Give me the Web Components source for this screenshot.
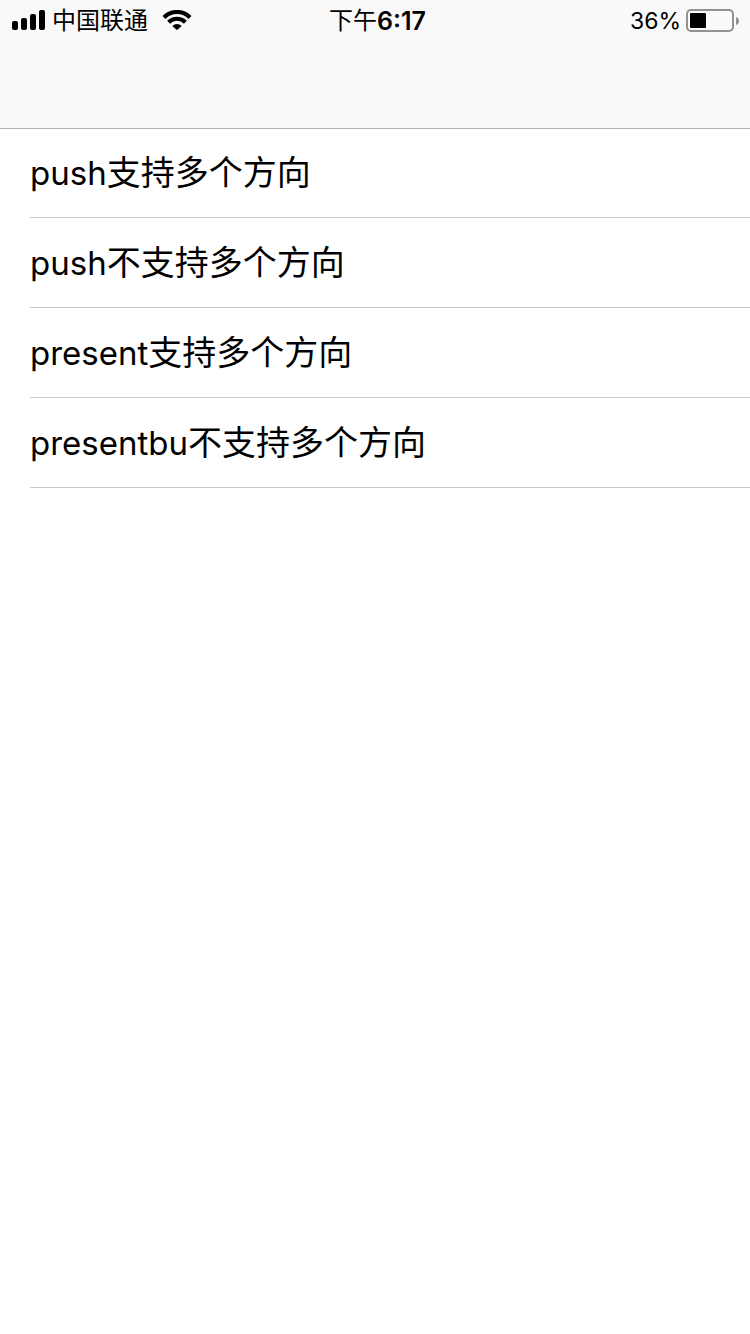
<!DOCTYPE html>
<html lang="zh-CN">
<head>
<meta charset="utf-8">
<meta name="viewport" content="width=device-width, initial-scale=1">
<title>方向</title>
<style>
body { margin: 0; background: #fff; color: #000; font-family: Inter, "Noto Sans CJK SC", sans-serif; }
</style>
</head>
<body>
<app-screen>
  <nav-header slot="header">
    <status-bar>
      <signal-icon slot="start"></signal-icon>
      <span slot="start">中国联通</span>
      <wifi-icon slot="start"></wifi-icon>
      <span slot="time">下午</span><b slot="time">6:17</b>
      <span slot="end">36%</span>
      <battery-icon slot="end"></battery-icon>
    </status-bar>
  </nav-header>
  <table-list>
    <table-cell><span>push</span>支持多个方向</table-cell>
    <table-cell><span>push</span>不支持多个方向</table-cell>
    <table-cell><span>present</span>支持多个方向</table-cell>
    <table-cell><span>presentbu</span>不支持多个方向</table-cell>
  </table-list>
</app-screen>
<script>
function define(name, html) {
  const template = document.createElement('template');
  template.innerHTML = html;
  customElements.define(name, class extends HTMLElement {
    constructor() {
      super();
      this.attachShadow({ mode: 'open' }).append(template.content.cloneNode(true));
    }
  });
}

define('app-screen', `
  <style>:host { display: block; min-height: 100vh; background: #fff; }</style>
  <slot name="header"></slot>
  <main><slot></slot></main>`);

define('nav-header', `
  <style>
    :host { display: block; background: #f9f9f9; }
    nav { height: 86px; border-bottom: 1px solid #b2b2b2; }
  </style>
  <slot></slot><nav></nav>`);

define('status-bar', `
  <style>
    :host { display: grid; grid-template-columns: 1fr auto 1fr; align-items: center; height: 42px; padding: 0 11px 0 12px; font-size: 24px; line-height: 42px; white-space: nowrap; }
    div { display: flex; align-items: center; }
    .start { gap: 7px; }
    .time { padding-left: 4px; }
    ::slotted(b) { font-size: 25px; font-weight: 600; }
    .end { justify-content: flex-end; gap: 5px; font-size: 23px; }
  </style>
  <div class="start"><slot name="start"></slot></div>
  <div class="time"><slot name="time"></slot></div>
  <div class="end"><slot name="end"></slot></div>`);

define('signal-icon', `
  <style>:host, svg { display: block; }</style>
  <svg width="33" height="22" viewBox="0 0 33 22" aria-hidden="true">
    <rect x="0" y="11" width="6" height="9" rx="2"/>
    <rect x="9" y="8" width="6" height="12" rx="2"/>
    <rect x="18" y="4" width="6" height="16" rx="2"/>
    <rect x="27" y="0" width="6" height="20" rx="2"/>
  </svg>`);

define('wifi-icon', `
  <style>:host { display: block; padding-left: 7px; } svg { display: block; }</style>
  <svg width="30" height="22" viewBox="0 0 30 22" aria-hidden="true">
    <g fill="none" stroke="#000" stroke-width="4.2">
      <path d="M2 7.4A18.4 18.4 0 0 1 28 7.4"/>
      <path d="M6.6 12.2A12 12 0 0 1 23.4 12.2"/>
    </g>
    <path d="M10.3 16A6.4 6.4 0 0 1 19.7 16L15.7 19.6Q15 20.2 14.3 19.6Z"/>
  </svg>`);

define('battery-icon', `
  <style>:host, svg { display: block; }</style>
  <svg width="53" height="24" viewBox="0 0 53 24" aria-hidden="true">
    <rect x="1" y="1" width="46" height="21" rx="4" fill="none" stroke="#929292" stroke-width="2"/>
    <rect x="4" y="4" width="16" height="15" rx="1"/>
    <path d="M50 8Q53 9 53 12T50 16Z" fill="#929292"/>
  </svg>`);

define('table-list', `
  <style>:host { display: block; margin-top: -1px; padding-left: 30px; }</style>
  <div role="list"><slot></slot></div>`);

define('table-cell', `
  <style>
    :host { display: block; border-bottom: 1px solid #c8c7cc; }
    button { display: block; width: 100%; height: 89px; margin: 0; padding: 0; border: 0; background: none; color: inherit; font: inherit; font-size: 34px; line-height: 88px; text-align: left; cursor: pointer; }
    ::slotted(span) { font-size: 33px; }
  </style>
  <div role="listitem"><button type="button"><slot></slot></button></div>`);
</script>
</body>
</html>
